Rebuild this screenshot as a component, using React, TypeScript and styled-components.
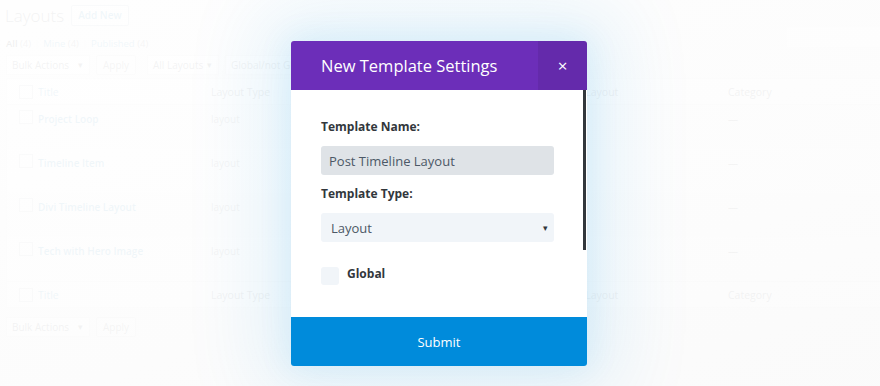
import React from 'react';
import styled, { createGlobalStyle } from 'styled-components';

const GlobalStyle = createGlobalStyle`
    html, body {
        margin: 0;
        padding: 0;
        background: #f1f1f1;
    }
    body {
        font-family: 'Open Sans', 'Noto Sans', sans-serif;
    }
`;

const rows = [
    { title: 'Project Loop', type: 'layout', global: 'Global' },
    { title: 'Timeline Item', type: 'layout', global: '' },
    { title: 'Divi Timeline Layout', type: 'layout', global: '' },
    { title: 'Tech with Hero Image', type: 'layout', global: '' },
];

const App: React.FC = () => {
    return (
        <>
            <GlobalStyle />
            <Page>
                <Admin>
                    <HeadingRow>
                        <PageTitle>Layouts</PageTitle>
                        <AddNew>Add New</AddNew>
                    </HeadingRow>
                    <TopBar>
                        <Views>
                            <b>All</b> <Count>(4)</Count> <Sep>|</Sep> <a>Mine</a> <Count>(4)</Count> <Sep>|</Sep>{' '}
                            <a>Published</a> <Count>(4)</Count>
                        </Views>
                        <Search />
                    </TopBar>
                    <TableNav>
                        <FakeSelect $width={84}>Bulk Actions</FakeSelect>
                        <FakeButton>Apply</FakeButton>
                        <FakeSelect $width={72} $gap>All Layouts</FakeSelect>
                        <FakeSelect $width={120}>Global/not Global</FakeSelect>
                    </TableNav>
                    <ListTable>
                        <HeadRow>
                            <CheckCell><Box /></CheckCell>
                            <HeadLink>Title</HeadLink>
                            <HeadText>Layout Type</HeadText>
                            <HeadText>Global Layout</HeadText>
                            <HeadText>Category</HeadText>
                        </HeadRow>
                        {rows.map((row) => (
                            <BodyRow key={row.title}>
                                <CheckCell><Box /></CheckCell>
                                <RowTitle>{row.title}</RowTitle>
                                <Cell>{row.type}</Cell>
                                <Cell>{row.global}</Cell>
                                <Cell>—</Cell>
                            </BodyRow>
                        ))}
                        <HeadRow $foot>
                            <CheckCell><Box /></CheckCell>
                            <HeadLink>Title</HeadLink>
                            <HeadText>Layout Type</HeadText>
                            <HeadText>Global Layout</HeadText>
                            <HeadText>Category</HeadText>
                        </HeadRow>
                    </ListTable>
                    <TableNav $bottom>
                        <FakeSelect $width={84}>Bulk Actions</FakeSelect>
                        <FakeButton>Apply</FakeButton>
                    </TableNav>
                </Admin>
                <Dim />
                <Modal>
                    <ModalHeader>
                        <ModalTitle>New Template Settings</ModalTitle>
                        <CloseButton>×</CloseButton>
                    </ModalHeader>
                    <ModalBody>
                        <Label>Template Name:</Label>
                        <NameInput defaultValue="Post Timeline Layout" />
                        <Label $spaced>Template Type:</Label>
                        <TypeSelect>
                            <span>Layout</span>
                            <Arrow>▾</Arrow>
                        </TypeSelect>
                        <CheckRow>
                            <CheckBox />
                            <CheckLabel>Global</CheckLabel>
                        </CheckRow>
                        <ScrollThumb />
                    </ModalBody>
                    <Submit>Submit</Submit>
                </Modal>
            </Page>
        </>
    );
};

const Page = styled.div`
    position: relative;
    width: 880px;
    height: 386px;
    overflow: hidden;
    background: #f1f1f1;
`;

const Admin = styled.div`
    padding: 5px 0 0 6px;
    color: #23282d;
    font-size: 10px;
`;

const HeadingRow = styled.div`
    display: flex;
    align-items: center;
    gap: 7px;
    height: 21px;
    margin-left: -1px;
`;

const PageTitle = styled.div`
    font-size: 17px;
    font-weight: 300;
    line-height: 21px;
`;

const AddNew = styled.div`
    border: 1px solid #9ab;
    border-radius: 2px;
    padding: 0 6px;
    height: 19px;
    line-height: 19px;
    font-size: 10px;
    font-weight: 600;
    color: #0073aa;
    background: #f7f7f7;
`;

const TopBar = styled.div`
    display: flex;
    justify-content: space-between;
    align-items: flex-start;
    height: 29px;
`;

const Views = styled.div`
    margin-top: 11px;
    font-size: 9.5px;
    color: #555;

    a {
        color: #0073aa;
    }
    b {
        color: #000;
        font-weight: 600;
    }
`;

const Count = styled.span`
    color: #555;
`;

const Sep = styled.span`
    color: #ddd;
    padding: 0 1px;
`;

const Search = styled.div`
    width: 93px;
    height: 20px;
    margin-top: 1px;
    background: #fff;
`;

const TableNav = styled.div<{ $bottom?: boolean }>`
    display: flex;
    align-items: center;
    gap: 6px;
    height: 20px;
    margin-top: ${(p) => (p.$bottom ? '9px' : '0')};
`;

const FakeSelect = styled.div<{ $width: number; $gap?: boolean }>`
    position: relative;
    width: ${(p) => p.$width}px;
    height: 20px;
    box-sizing: border-box;
    border: 1px solid #ddd;
    background: #fff;
    font-size: 10px;
    line-height: 18px;
    padding-left: 5px;
    color: #32373c;
    margin-left: ${(p) => (p.$gap ? '5px' : '0')};
    white-space: nowrap;
    overflow: hidden;

    &::after {
        content: '▾';
        position: absolute;
        right: 6px;
        top: 0;
        font-size: 9px;
    }
`;

const FakeButton = styled.div`
    height: 20px;
    width: 40px;
    box-sizing: border-box;
    border: 1px solid #ccc;
    border-radius: 2px;
    background: #f7f7f7;
    text-align: center;
    font-size: 10px;
    line-height: 18px;
    color: #555;
`;

const ListTable = styled.div`
    margin-top: 3px;
    width: 900px;
    background: #fff;
    border: 1px solid #e5e5e5;
`;

const grid = `
    display: grid;
    grid-template-columns: 25px 173px 340px 177px 1fr;
`;

const HeadRow = styled.div<{ $foot?: boolean }>`
    ${grid}
    height: 26px;
    align-items: center;
    border-bottom: ${(p) => (p.$foot ? 'none' : '1px solid #e1e1e1')};
    border-top: ${(p) => (p.$foot ? '1px solid #e1e1e1' : 'none')};
    box-sizing: border-box;
`;

const BodyRow = styled.div`
    ${grid}
    height: 44px;
    align-items: start;
    padding-top: 4px;
    box-sizing: border-box;
    background: #fff;

    &:nth-child(even) {
        background: #f9f9f9;
    }
`;

const CheckCell = styled.div`
    display: flex;
    justify-content: flex-end;
    padding-top: 1px;
`;

const Box = styled.div`
    width: 12px;
    height: 12px;
    border: 1px solid #b4b9be;
    background: #fff;
    margin-right: -1px;
`;

const HeadLink = styled.div`
    padding-left: 6px;
    font-size: 10.5px;
    color: #0073aa;
`;

const HeadText = styled.div`
    padding-left: 6px;
    font-size: 10.5px;
    color: #32373c;
`;

const RowTitle = styled.div`
    padding-left: 6px;
    font-size: 10px;
    font-weight: 600;
    line-height: 20px;
    color: #0073aa;
`;

const Cell = styled.div`
    padding-left: 6px;
    font-size: 10px;
    line-height: 20px;
    color: #555;
`;

const Dim = styled.div`
    position: absolute;
    inset: 0;
    background: linear-gradient(160deg, rgba(255, 255, 255, 0.94), rgba(251, 251, 251, 0.95));
`;

const Modal = styled.div`
    position: absolute;
    left: 291px;
    top: 41px;
    width: 296px;
    border-radius: 3px;
    overflow: hidden;
    background: #fff;
    box-shadow: 0 0 80px 30px rgba(0, 150, 230, 0.1), 0 0 30px 5px rgba(0, 150, 230, 0.08);
`;

const ModalHeader = styled.div`
    display: flex;
    align-items: stretch;
    height: 49px;
    background: #6c2eb9;
`;

const ModalTitle = styled.div`
    flex: 1;
    padding-left: 30px;
    font-size: 16.5px;
    line-height: 50px;
    color: #fff;
`;

const CloseButton = styled.div`
    width: 49px;
    background: rgba(0, 0, 0, 0.07);
    color: #fff;
    font-size: 17px;
    line-height: 49px;
    text-align: center;
`;

const ModalBody = styled.div`
    position: relative;
    height: 227px;
    box-sizing: border-box;
    overflow: hidden;
    padding: 29px 33px 0 30px;
    display: flex;
    flex-direction: column;
`;

const ScrollThumb = styled.div`
    position: absolute;
    top: 0;
    right: 1px;
    width: 3px;
    height: 160px;
    background: #32373c;
`;

const Label = styled.div<{ $spaced?: boolean }>`
    font-size: 12px;
    font-weight: 700;
    line-height: 16px;
    color: #32373c;
    margin-top: ${(p) => (p.$spaced ? '11px' : '0')};
    margin-bottom: 11px;
`;

const NameInput = styled.input`
    height: 29px;
    width: 233px;
    box-sizing: border-box;
    border: none;
    border-radius: 3px;
    background: #dfe3e7;
    padding: 0 8px;
    font-family: 'Open Sans', 'Noto Sans', sans-serif;
    font-size: 13px;
    color: #4c5866;
    outline: none;
    flex-shrink: 0;
`;

const TypeSelect = styled.div`
    display: flex;
    align-items: center;
    justify-content: space-between;
    height: 29px;
    width: 233px;
    box-sizing: border-box;
    border-radius: 3px;
    background: #f1f5f9;
    padding: 0 6px 0 10px;
    font-size: 13px;
    color: #4c5866;
    flex-shrink: 0;
`;

const Arrow = styled.span`
    font-size: 9px;
    color: #32373c;
`;

const CheckRow = styled.div`
    display: flex;
    align-items: flex-start;
    gap: 8px;
    margin-top: 25px;
    flex-shrink: 0;
`;

const CheckBox = styled.div`
    width: 18px;
    height: 18px;
    border-radius: 3px;
    background: #f1f5f9;
`;

const CheckLabel = styled.div`
    font-size: 12px;
    font-weight: 700;
    line-height: 14px;
    color: #32373c;
`;

const Submit = styled.div`
    height: 49px;
    background: #008bdb;
    color: #fff;
    font-size: 13px;
    line-height: 50px;
    text-align: center;
`;

export default App;
